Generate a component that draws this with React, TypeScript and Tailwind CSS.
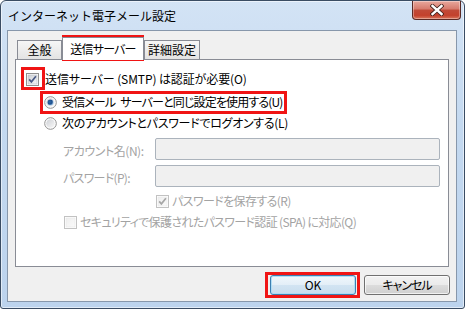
import React from "react";

const font = "font-['Noto_Sans_CJK_JP','Noto_Sans_CJK_SC',sans-serif]";
const palt = "[font-feature-settings:'palt']";

function CheckBox({ checked, disabled }: { checked?: boolean; disabled?: boolean }) {
  const border = disabled ? "#c2c2c2" : "#8f8f8f";
  const gid = `cb${checked ? 1 : 0}${disabled ? 1 : 0}`;
  return (
    <svg width="13" height="13" viewBox="0 0 13 13" className="shrink-0">
      <defs>
        <linearGradient id={gid} x1="0" y1="0" x2="1" y2="1">
          <stop offset="0" stopColor={disabled ? "#eeeeee" : "#cbcfd5"} />
          <stop offset="1" stopColor={disabled ? "#fafafa" : "#f6f6f6"} />
        </linearGradient>
      </defs>
      <rect x="0.5" y="0.5" width="12" height="12" fill="#fff" stroke={border} />
      <rect x="2" y="2" width="9" height="9" fill={`url(#${gid})`} stroke={disabled ? "#e6e6e6" : "#b9bcc2"} strokeWidth="0.6" />
      {checked && (
        <path
          d="M3.2 6.4 L5.4 8.9 L9.9 3.3"
          fill="none"
          stroke={disabled ? "#a6a6a6" : "#4a5a86"}
          strokeWidth="1.7"
        />
      )}
    </svg>
  );
}

function Radio({ checked }: { checked?: boolean }) {
  return (
    <svg width="13" height="13" viewBox="0 0 13 13" className="shrink-0">
      <defs>
        <linearGradient id="rbg" x1="0" y1="0" x2="1" y2="1">
          <stop offset="0" stopColor="#cdd0d5" />
          <stop offset="1" stopColor="#f8f8f8" />
        </linearGradient>
        <radialGradient id="rdot" cx="0.4" cy="0.4" r="0.6">
          <stop offset="0" stopColor="#2e6aa8" />
          <stop offset="0.6" stopColor="#1d4e8c" />
          <stop offset="1" stopColor="#9cc3e6" />
        </radialGradient>
      </defs>
      <circle cx="6.5" cy="6.5" r="5.8" fill="#fff" stroke="#8f8f8f" strokeWidth="1" />
      <circle cx="6.5" cy="6.5" r="4.3" fill="url(#rbg)" />
      {checked && <circle cx="6.5" cy="6.5" r="3" fill="url(#rdot)" />}
    </svg>
  );
}

export default function App() {
  return (
    <div className={`relative w-[465px] h-[309px] bg-white ${font} text-[12px] text-black`}>
      <div className="flex flex-col w-full h-full border border-[#3a4c63] rounded-t-[6px] rounded-b-[3px] bg-[linear-gradient(180deg,#d3e3f5_0%,#c4d9f0_40%,#bcd3ed_100%)] shadow-[inset_0_0_0_1px_rgba(255,255,255,0.55)]">
        {/* Title bar */}
        <div className="flex h-[29px] shrink-0">
          <div className="pl-[7px] pt-[6px] leading-[18px] text-[12px]">インターネット電子メール設定</div>
          <div className="ml-auto mr-[3px] mt-0 w-[49px] h-[19px] rounded-b-[4px] border border-t-0 border-[#5a2a25] bg-[linear-gradient(180deg,#e8a89d_0%,#d67a6c_45%,#c04a38_50%,#c3412d_80%,#d9765c_100%)] flex items-center justify-center shadow-[inset_0_0_0_1px_rgba(255,255,255,0.35)]">
            <svg width="14" height="12" viewBox="0 0 14 12">
              <path d="M2.5 2 L11.5 10 M11.5 2 L2.5 10" stroke="#3b1d18" strokeWidth="4" strokeLinecap="square" />
              <path d="M2.5 2 L11.5 10 M11.5 2 L2.5 10" stroke="#ffffff" strokeWidth="2.4" strokeLinecap="square" />
            </svg>
          </div>
        </div>

        {/* Client area */}
        <div className="ml-[6px] mr-[7px] mb-[6px] h-[272px] border border-[#8797ab] bg-[#f0f0f0] flex flex-col">
          {/* Tabs */}
          <div className="ml-[9px] pt-[6px] flex items-end relative z-10">
            <div className={`w-[45px] h-[19px] border border-b-0 border-[#898c95] bg-[linear-gradient(180deg,#f6f6f6,#e3e3e3)] flex items-center justify-center leading-[16px] ${palt}`}>
              全般
            </div>
            <div className={`w-[82px] h-[23px] -mb-px border border-b-0 border-[#898c95] bg-white flex items-start pt-[3px] justify-center leading-[16px] tracking-[-0.8px] ${palt}`}>
              送信サーバー
            </div>
            <div className={`w-[56px] h-[19px] border border-b-0 border-[#898c95] bg-[linear-gradient(180deg,#f6f6f6,#e3e3e3)] flex items-center justify-center leading-[16px] ${palt}`}>
              詳細設定
            </div>
          </div>

          {/* Panel */}
          <div className={`mx-[7px] h-[208px] border border-[#898c95] bg-white flex flex-col leading-[16px] ${palt}`}>
            <div className="mt-[11px] ml-[10px] h-[16px] flex items-center gap-[6px]">
              <CheckBox checked />
              <span className="tracking-[-0.1px]">送信サーバー (SMTP) は認証が必要(O)</span>
            </div>
            <div className="mt-[7px] ml-[28px] h-[16px] flex items-center gap-[5px]">
              <Radio checked />
              <span className="tracking-[-0.85px]">
                受信メール<span className="inline-block w-[5px]"> </span>サーバーと同じ設定を使用する(U)
              </span>
            </div>
            <div className="mt-[5px] ml-[28px] h-[16px] flex items-center gap-[5px]">
              <Radio />
              <span className="tracking-[-0.3px]">次のアカウントとパスワードでログオンする(L)</span>
            </div>
            <div className="mt-[7px] ml-[47px] h-[22px] flex items-center">
              <span className="w-[92px] text-[#a3a3a3] pt-[4px] tracking-[-0.45px]">アカウント名(N):</span>
              <div className="w-[285px] h-[22px] border border-[#abb3bc] rounded-[2px] bg-[#f0f0f0]" />
            </div>
            <div className="mt-[5px] ml-[47px] h-[22px] flex items-center">
              <span className="w-[92px] text-[#a3a3a3] pt-[4px] tracking-[-0.7px]">パスワード(P):</span>
              <div className="w-[285px] h-[22px] border border-[#abb3bc] rounded-[2px] bg-[#f0f0f0]" />
            </div>
            <div className="mt-[6px] ml-[140px] h-[16px] flex items-center gap-[3px]">
              <CheckBox checked disabled />
              <span className="text-[#a3a3a3] tracking-[-0.6px]">パスワードを保存する(R)</span>
            </div>
            <div className="mt-[5px] ml-[48px] h-[16px] flex items-center gap-[3px]">
              <CheckBox disabled />
              <span className="text-[#a3a3a3] tracking-[-0.65px]">セキュリティで保護されたパスワード認証 (SPA) に対応(Q)</span>
            </div>
          </div>

          {/* Buttons */}
          <div className={`mt-[8px] mr-[6px] flex justify-end gap-[8px] ${palt}`}>
            <div className="w-[86px] h-[20px] rounded-[3px] border border-[#3c7fb1] bg-[linear-gradient(180deg,#f0f7fc_0%,#e3eef7_50%,#d2e4f2_50%,#c8ddee_100%)] shadow-[inset_0_0_0_1px_rgba(170,220,245,0.9)] flex items-center justify-center leading-[16px]">
              OK
            </div>
            <div className="w-[86px] h-[20px] rounded-[3px] border border-[#707070] bg-[linear-gradient(180deg,#f2f2f2_0%,#ebebeb_50%,#dddddd_50%,#cfcfcf_100%)] shadow-[inset_0_0_0_1px_rgba(255,255,255,0.7)] flex items-center justify-center leading-[16px] tracking-[-1px]">
              キャンセル
            </div>
          </div>
        </div>
      </div>

      {/* Red annotation boxes */}
      <div className="absolute left-[62px] top-[35px] w-[82px] h-[26px] border-[3px] border-[#f01414] pointer-events-none" />
      <div className="absolute left-[21px] top-[67px] w-[24px] h-[23px] border-[3px] border-[#f01414] pointer-events-none" />
      <div className="absolute left-[40px] top-[91px] w-[247px] h-[23px] border-[3px] border-[#f01414] pointer-events-none" />
      <div className="absolute left-[265px] top-[272px] w-[95px] h-[26px] border-[3px] border-[#f01414] pointer-events-none" />
    </div>
  );
}
